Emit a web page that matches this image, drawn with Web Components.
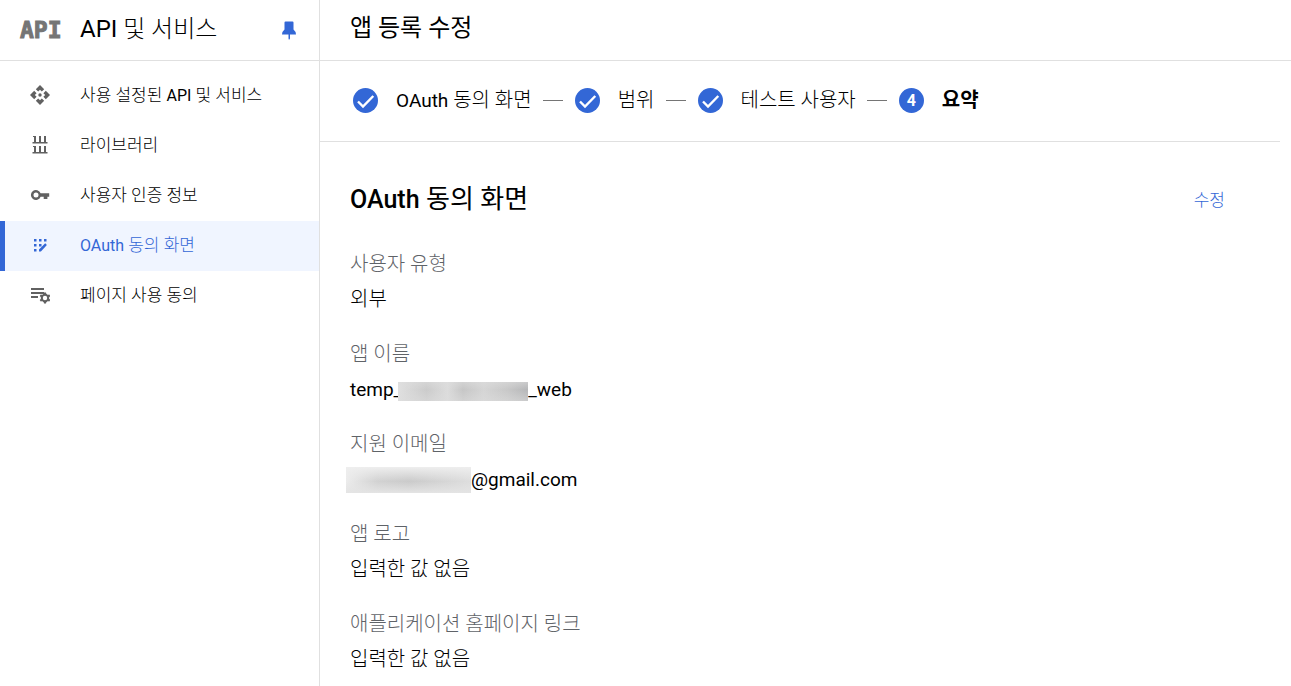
<!DOCTYPE html>
<html lang="ko">
<head>
<meta charset="utf-8">
<title>앱 등록 수정</title>
<style>
  body {
    margin: 0;
    background: #fff;
    color: #000;
    font-family: Roboto, "Noto Sans CJK KR", sans-serif;
    font-weight: 300;
    --blue: #3367d6;
    --line: #e0e0e0;
    --muted: #5f6368;
    --icon: #616161;
  }
</style>
</head>
<body>
<console-app></console-app>

<template id="t-app">
  <style>
    :host { display: grid; grid-template-columns: 320px minmax(0, 1fr); min-height: 100vh; }
    main { display: flex; flex-direction: column; min-width: 0; }
    header { box-sizing: border-box; height: 61px; padding: 0 30px; border-bottom: 1px solid var(--line); display: flex; align-items: center; }
    h1 { margin: 0; padding-bottom: 4px; font-size: 24px; line-height: 32px; font-weight: 400; }
    .steps { margin-right: 11px; }
    .summary { margin-right: 66px; padding: 38px 0 0 30px; }
  </style>
  <console-sidebar>
    <nav-item icon="apis">사용 설정된 <lat-text>API</lat-text> 및 서비스</nav-item>
    <nav-item icon="library">라이브러리</nav-item>
    <nav-item icon="key">사용자 인증 정보</nav-item>
    <nav-item icon="consent" current><lat-text>OAuth</lat-text> 동의 화면</nav-item>
    <nav-item icon="agreement">페이지 사용 동의</nav-item>
  </console-sidebar>
  <main>
    <header><h1>앱 등록 수정</h1></header>
    <step-list class="steps">
      <step-item done><lat-text>OAuth</lat-text> 동의 화면</step-item>
      <step-item done>범위</step-item>
      <step-item done>테스트 사용자</step-item>
      <step-item number="4">요약</step-item>
    </step-list>
    <summary-section class="summary">
      <span slot="title"><lat-text>OAuth</lat-text> 동의 화면</span>
      <summary-field label="사용자 유형">외부</summary-field>
      <summary-field label="앱 이름"><lat-text>temp_</lat-text><redacted-text kind="name"></redacted-text><lat-text>_web</lat-text></summary-field>
      <summary-field label="지원 이메일"><redacted-text kind="mail"></redacted-text><lat-text>@gmail.com</lat-text></summary-field>
      <summary-field label="앱 로고">입력한 값 없음</summary-field>
      <summary-field label="애플리케이션 홈페이지 링크">입력한 값 없음</summary-field>
    </summary-section>
  </main>
</template>

<template id="t-sidebar">
  <style>
    :host { display: block; box-sizing: border-box; border-right: 1px solid var(--line); --lat: 24px; }
    header { box-sizing: border-box; height: 61px; border-bottom: 1px solid var(--line); padding: 0 20px; display: flex; align-items: center; }
    .logo { width: 60px; font: 700 23px/32px "DejaVu Sans Mono", monospace; color: #757575; -webkit-text-stroke: 1px #757575; }
    h2 { flex: 1; margin: 0; padding-bottom: 3px; font-size: 24px; line-height: 32px; font-weight: 300; }
    button { border: 0; padding: 0; background: none; width: 20px; height: 20px; color: var(--blue); }
    svg { display: block; }
    nav { padding-top: 10px; }
  </style>
  <header>
    <span class="logo">API</span>
    <h2><lat-text>API</lat-text> 및 서비스</h2>
    <button aria-label="메뉴 고정"><svg width="20" height="20" viewBox="0 0 20 20" fill="currentColor"><path d="M5.500 2.500Q5.500 1.500 6.500 1.500H13.500Q14.500 1.500 14.500 2.500V9.500Q17 11.500 17 14.500H11V18.500L10 20 9.500 18.500V14.500H3Q3 11.500 5.500 9.500Z"/></svg></button>
  </header>
  <nav><slot></slot></nav>
</template>

<template id="t-nav">
  <style>
    :host { display: block; --lat: 16px; }
    a { box-sizing: border-box; height: 50px; border-left: 5px solid transparent; padding: 0 0 2px 25px; display: flex; align-items: center; gap: 30px; color: #000; font-size: 17px; line-height: 24px; text-decoration: none; }
    svg { width: 20px; height: 20px; flex: none; color: var(--icon); }
    :host([current]) a { background: #f0f5ff; border-left-color: var(--blue); color: var(--blue); }
    :host([current]) svg { color: var(--blue); }
  </style>
  <a href="#"><svg viewBox="0 0 20 20" fill="currentColor" aria-hidden="true"></svg><span class="text"><slot></slot></span></a>
</template>

<template id="t-steps">
  <style>
    :host { box-sizing: border-box; height: 81px; border-bottom: 1px solid var(--line); padding: 0 0 2px 33px; display: flex; align-items: center; }
  </style>
  <slot></slot>
</template>

<template id="t-step">
  <style>
    :host { display: flex; align-items: center; font-size: 20px; line-height: 28px; white-space: nowrap; --lat: 19px; }
    .dot { width: 25px; height: 25px; border-radius: 50%; background: var(--blue); color: #fff; display: grid; place-items: center; font-size: 16px; line-height: 25px; font-weight: 700; }
    .text { margin-left: 18px; }
    :host([number]) .text { font-weight: 700; }
    :host([done])::after { content: ""; width: 20px; height: 1px; margin: 0 12px 0 11px; background: #757575; }
  </style>
  <span class="dot"></span><span class="text"><slot></slot></span>
</template>

<template id="t-section">
  <style>
    :host { display: block; --lat: 25px; }
    header { display: flex; align-items: center; justify-content: space-between; }
    h2 { margin: 0; font-size: 26px; line-height: 38px; font-weight: 400; --lat-weight: 500; }
    a { color: var(--blue); font-size: 17px; line-height: 24px; text-decoration: none; }
    dl { margin: 28px 0 0; display: flex; flex-direction: column; gap: 20px; }
  </style>
  <header><h2><slot name="title"></slot></h2><a href="#">수정</a></header>
  <dl><slot></slot></dl>
</template>

<template id="t-field">
  <style>
    :host { display: block; font-size: 20px; --lat: 19px; }
    dt { color: var(--muted); line-height: 35px; }
    dd { margin: 0; line-height: 35px; height: 35px; display: flex; align-items: center; }
  </style>
  <dt></dt><dd><slot></slot></dd>
</template>

<template id="t-redacted">
  <style>
    :host { display: block; position: relative; width: 130px; height: 19px; margin: 3px 0 0 -4px; background: linear-gradient(180deg, #ddd8 0, transparent 40%, #ddd8 100%), linear-gradient(90deg, #e0e0e0, #cbcbcb 22%, #dcdcdc 38%, #c6c6c6 50%, #d5d5d5 66%, #c8c8c8 84%, #b5b6b8); }
    :host([kind="mail"]) { width: 125px; height: 26px; margin-top: 0; background: linear-gradient(180deg, #eee 0, transparent 55%, #e4e4e4 100%), linear-gradient(90deg, #ececec, #d2d2d2 25%, #cacaca 50%, #d4d4d4 75%, #dedede); }
  </style>
</template>

<script>
  const icons = {
    apis: '<path d="M10 0l4.200 4.200-2.400 2.400L10 4.800 8.200 6.600 5.800 4.200zM10 20l-4.200-4.200 2.400-2.400 1.800 1.800 1.800-1.800 2.400 2.400zM0 10l4.200-4.200 2.400 2.400L4.800 10l1.800 1.800-2.400 2.400zM20 10l-4.200 4.200-2.400-2.400 1.800-1.800-1.800-1.800 2.400-2.400z"/><circle cx="10" cy="10" r="1.700"/>',
    library: '<path d="M3 1h3v6h2V1h3v6h2V1h3v6h1.500v1.500H2.500V7H4V2H3zM3 11h3v6h2v-6h3v6h2v-6h3v6h1.500v1.500H2.500V17H4v-5H3z"/><path fill="#fff" d="M8 1h1v6H8zM13 1h1v6h-1zM8 11h1v6H8zM13 11h1v6h-1z"/>',
    key: '<path fill-rule="evenodd" d="M10.600 8.300H19.200V11.700H17.400V14H13.700V11.700H10.600A5 5 0 1 1 10.600 8.300zM6 7.500a2.500 2.500 0 1 0 0 5 2.500 2.500 0 0 0 0-5z"/>',
    consent: '<path d="M4 4h2.500v2.500H4zM9 4h2.500v2.500H9zM14 4h2.500v2.500H14zM4 9h2.500v2.500H4zM9 9h2.500v2.500H9zM4 14h2.500v2.500H4zM9 16.500v-2L15.200 8.300l1.700 1.700-6 6.500z"/>',
    agreement: '<path d="M1 3h13v2H1zM1 7h13v2H1zM1 11h7v2H1z"/><circle cx="15" cy="13" r="3.200" fill="none" stroke="currentColor" stroke-width="2"/><path d="M14 7.500h2l.5 2h-3zM14 18.500h2l.5-2h-3zM9.700 11.100l1-1.700 2 .6-1.500 2.600zM20.300 14.900l-1 1.700-2-.6 1.500-2.600zM9.700 14.900l1 1.700 2-.6-1.500-2.600zM20.300 11.100l-1-1.700-2 .6 1.500 2.600z"/>'
  };

  class BaseElement extends HTMLElement {
    constructor() {
      super();
      this.attachShadow({ mode: 'open' })
        .append(document.getElementById(this.constructor.template).content.cloneNode(true));
    }
    find(selector) { return this.shadowRoot.querySelector(selector); }
  }

  class LatText extends HTMLElement {
    constructor() {
      super();
      this.attachShadow({ mode: 'open' }).innerHTML =
        '<style>:host { font-size: var(--lat); font-weight: var(--lat-weight, 400); }</style><slot></slot>';
    }
  }
  class RedactedText extends BaseElement { static template = 't-redacted'; }
  class NavItem extends BaseElement {
    static template = 't-nav';
    connectedCallback() {
      this.find('svg').innerHTML = icons[this.getAttribute('icon')];
      if (this.hasAttribute('current')) this.find('a').setAttribute('aria-current', 'page');
    }
  }
  class ConsoleSidebar extends BaseElement { static template = 't-sidebar'; }
  class StepList extends BaseElement { static template = 't-steps'; }
  class StepItem extends BaseElement {
    static template = 't-step';
    connectedCallback() {
      const dot = this.find('.dot');
      if (this.hasAttribute('done')) {
        dot.innerHTML = '<svg width="25" height="25" viewBox="0 0 25 25" fill="none" stroke="#fff" stroke-width="2.400" aria-hidden="true"><path d="M5 13.500l5 5L20.300 8"/></svg>';
      } else {
        dot.textContent = this.getAttribute('number');
      }
    }
  }
  class SummarySection extends BaseElement { static template = 't-section'; }
  class SummaryField extends BaseElement {
    static template = 't-field';
    connectedCallback() { this.find('dt').textContent = this.getAttribute('label'); }
  }
  class ConsoleApp extends BaseElement { static template = 't-app'; }

  customElements.define('lat-text', LatText);
  customElements.define('redacted-text', RedactedText);
  customElements.define('nav-item', NavItem);
  customElements.define('console-sidebar', ConsoleSidebar);
  customElements.define('step-item', StepItem);
  customElements.define('step-list', StepList);
  customElements.define('summary-field', SummaryField);
  customElements.define('summary-section', SummarySection);
  customElements.define('console-app', ConsoleApp);
</script>
</body>
</html>
